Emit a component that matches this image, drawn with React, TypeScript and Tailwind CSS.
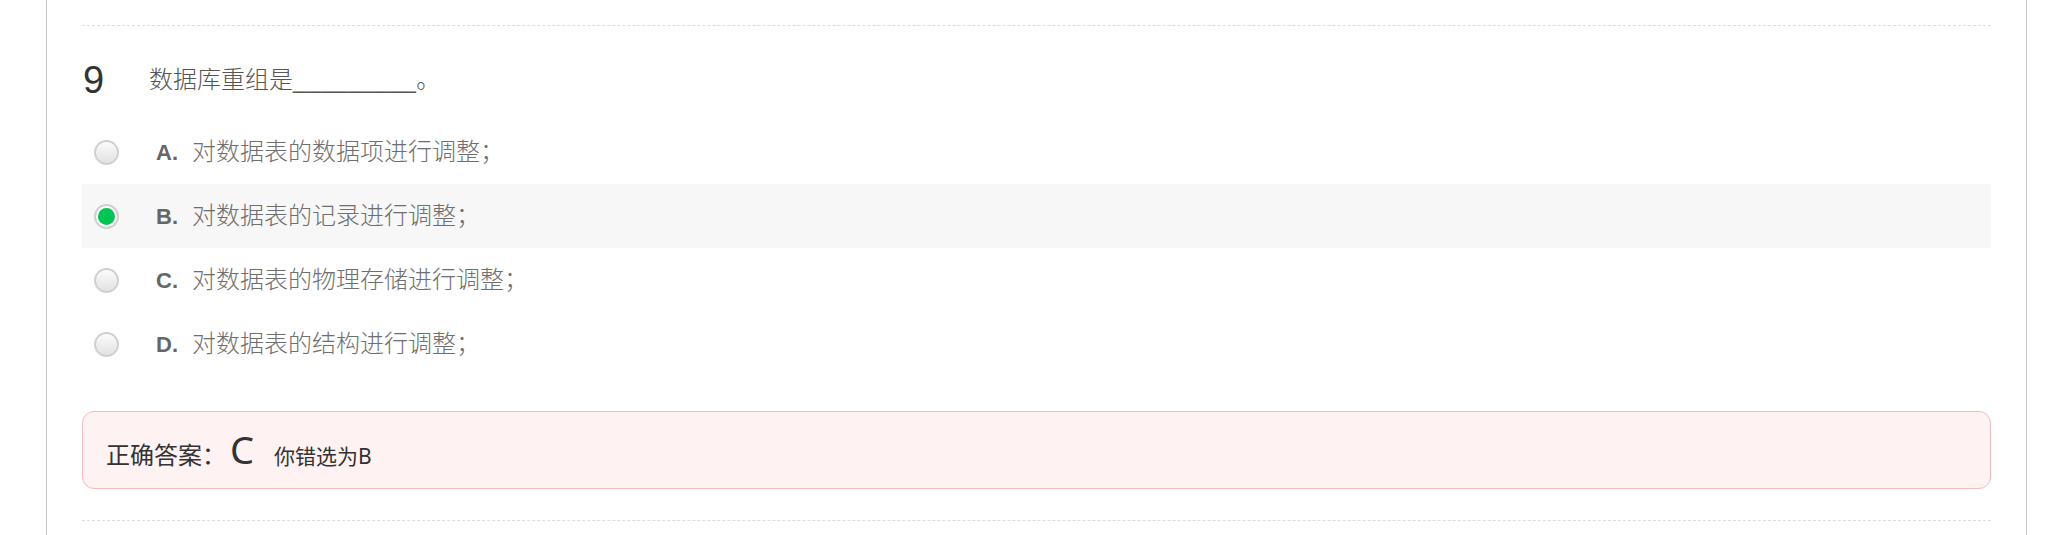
const options = [
  { key: "A", text: "对数据表的数据项进行调整；" },
  { key: "B", text: "对数据表的记录进行调整；" },
  { key: "C", text: "对数据表的物理存储进行调整；" },
  { key: "D", text: "对数据表的结构进行调整；" },
];

const selected = "B";

const Radio = ({ checked }: { checked: boolean }) =>
  checked ? (
    <span className="flex h-[25px] w-[25px] items-center justify-center rounded-full border-2 border-[#cfcfcf] bg-white">
      <span className="h-[17px] w-[17px] rounded-full bg-[#00c454]" />
    </span>
  ) : (
    <span className="h-[25px] w-[25px] rounded-full border-2 border-[#d0d0d0] bg-gradient-to-b from-[#fbfbfb] to-[#e2e2e2] shadow-[inset_0_1px_1px_rgba(255,255,255,0.9)]" />
  );

export default function App() {
  const font = "font-['Liberation_Sans','Noto_Sans_CJK_SC',sans-serif]";
  const answerFont = "font-['Noto_Sans','Noto_Sans_CJK_SC',sans-serif]";

  return (
    <div className="h-[535px] w-full overflow-hidden bg-white">
      <div className="ml-[46px] h-[535px] w-[1981px] border-x border-[#c8c8c8] px-[35px] pt-[25px]">
        <div className="border-t border-dashed border-[#dcdcdc]" />

        <div className={`flex items-start pt-[35px] ${font}`}>
          <span className="ml-px w-[66px] text-[38px] leading-[38px] text-[#333]">
            9
          </span>
          <span className="mt-[4px] text-[24px] font-light leading-[30px] text-[#555]">
            数据库重组是<span className="tracking-[0.35px]">_________</span>。
          </span>
        </div>

        <div className={`mt-[21px] ${font}`}>
          {options.map((option) => (
            <div
              key={option.key}
              className={`flex h-[64px] items-center pl-[12px] ${
                option.key === selected ? "bg-[#f7f7f7]" : ""
              }`}
            >
              <Radio checked={option.key === selected} />
              <span className="ml-[37px] w-[36px] text-[22px] font-bold text-[#666]">
                {option.key}.
              </span>
              <span className="text-[24px] font-light text-[#6f6f6f]">
                {option.text}
              </span>
            </div>
          ))}
        </div>

        <div
          className={`mt-[35px] flex h-[78px] items-center rounded-[12px] border border-[#f4bcbc] bg-[#fff2f2] pl-[23px] ${answerFont}`}
        >
          <div className="flex items-baseline text-[#333]">
            <span className="text-[24px]">正确答案：</span>
            <span className="ml-[4px] text-[38px] leading-[44px]">C</span>
            <span className="ml-[20px] text-[21px]">你错选为B</span>
          </div>
        </div>

        <div className="mt-[31px] border-t border-dashed border-[#dcdcdc]" />
      </div>
    </div>
  );
}
